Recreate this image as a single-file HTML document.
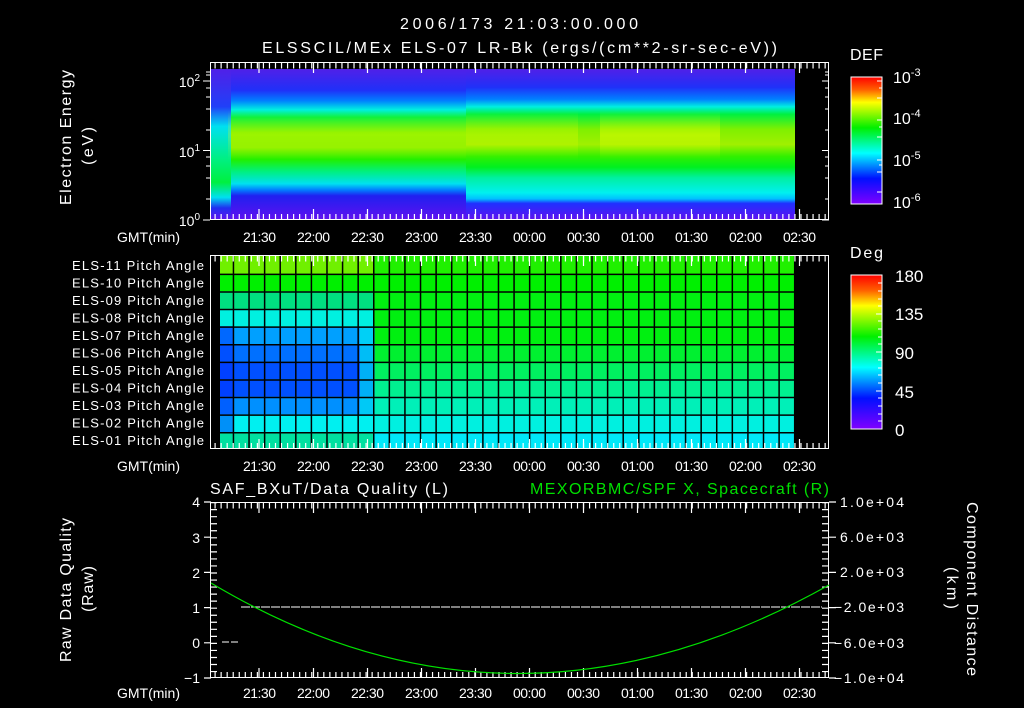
<!DOCTYPE html>
<html><head><meta charset="utf-8"><style>
html,body{margin:0;padding:0;background:#000;}
svg{display:block;}
text{font-family:"Liberation Sans",sans-serif;fill:#fff;}
</style></head><body>
<svg width="1024" height="708" viewBox="0 0 1024 708" xmlns="http://www.w3.org/2000/svg">
<defs>
<linearGradient id="spR" x1="0" y1="0" x2="0" y2="1">
<stop offset="0" stop-color="#5020e8"/><stop offset="0.12" stop-color="#2030f8"/><stop offset="0.2" stop-color="#0080ff"/>
<stop offset="0.25" stop-color="#00f0e0"/><stop offset="0.3" stop-color="#00f040"/><stop offset="0.4" stop-color="#80f000"/>
<stop offset="0.5" stop-color="#a0f000"/><stop offset="0.58" stop-color="#30f000"/><stop offset="0.65" stop-color="#00f020"/>
<stop offset="0.72" stop-color="#00f0a0"/><stop offset="0.82" stop-color="#00f0f0"/><stop offset="0.86" stop-color="#00c0ff"/>
<stop offset="0.89" stop-color="#2030ff"/><stop offset="1" stop-color="#6010f0"/></linearGradient>
<linearGradient id="spM" x1="0" y1="0" x2="0" y2="1">
<stop offset="0" stop-color="#5020e8"/><stop offset="0.14" stop-color="#2030f8"/><stop offset="0.21" stop-color="#0080ff"/>
<stop offset="0.27" stop-color="#00f0e0"/><stop offset="0.32" stop-color="#00f040"/><stop offset="0.42" stop-color="#78f000"/>
<stop offset="0.52" stop-color="#88f000"/><stop offset="0.6" stop-color="#20f000"/><stop offset="0.68" stop-color="#00f080"/>
<stop offset="0.76" stop-color="#00e0f0"/><stop offset="0.8" stop-color="#0080ff"/><stop offset="0.84" stop-color="#2020f0"/>
<stop offset="1" stop-color="#6010f0"/></linearGradient>
<linearGradient id="spL" x1="0" y1="0" x2="0" y2="1">
<stop offset="0" stop-color="#5020e8"/><stop offset="0.25" stop-color="#2040f8"/><stop offset="0.38" stop-color="#00e0f0"/>
<stop offset="0.6" stop-color="#00f080"/><stop offset="0.75" stop-color="#00f040"/><stop offset="0.85" stop-color="#00e0f0"/>
<stop offset="0.92" stop-color="#2030f0"/><stop offset="1" stop-color="#6010f0"/></linearGradient>
<linearGradient id="cb" x1="0" y1="0" x2="0" y2="1">
<stop offset="0" stop-color="#ff0000"/><stop offset="0.1" stop-color="#ff6000"/><stop offset="0.2" stop-color="#ffff00"/>
<stop offset="0.4" stop-color="#00f000"/><stop offset="0.6" stop-color="#00ffff"/><stop offset="0.8" stop-color="#0010ff"/>
<stop offset="1" stop-color="#8000ff"/></linearGradient>
<linearGradient id="hx" x1="0" y1="0" x2="1" y2="0">
<stop offset="0" stop-color="#000" stop-opacity="0"/><stop offset="0.5" stop-color="#000" stop-opacity="1"/><stop offset="1" stop-color="#000" stop-opacity="0"/></linearGradient>
<linearGradient id="yl" x1="0" y1="0" x2="0" y2="1">
<stop offset="0" stop-color="#ffff00" stop-opacity="0"/><stop offset="0.5" stop-color="#ffff00" stop-opacity="0.5"/><stop offset="1" stop-color="#ffff00" stop-opacity="0"/></linearGradient>
</defs>

<text x="400" y="29" font-size="16" textLength="238" lengthAdjust="spacing">2006/173 21:03:00.000</text>
<text x="262" y="53" font-size="16" textLength="515" lengthAdjust="spacing">ELSSCIL/MEx ELS-07 LR-Bk  (ergs/(cm**2-sr-sec-eV))</text>

<!-- Panel 1 spectrogram -->
<rect x="211" y="69" width="584" height="151" fill="url(#spR)"/>
<rect x="226" y="69" width="240" height="151" fill="url(#spM)"/>
<rect x="211" y="69" width="20" height="151" fill="url(#spL)"/>
<rect x="228" y="110" width="350" height="50" fill="url(#yl)" opacity="0.5"/>
<rect x="600" y="110" width="120" height="50" fill="url(#yl)" opacity="0.8"/>
<rect x="795" y="63" width="34" height="157" fill="#000"/>
<rect x="210.5" y="62.5" width="618" height="157" fill="none" stroke="#fff"/>
<g stroke="#fff" stroke-width="1.2">
<line x1="211" y1="65.5" x2="829" y2="65.5" stroke-width="6" stroke-dasharray="1.2 4.84" stroke-dashoffset="-3.5"/>
<line x1="211" y1="217" x2="829" y2="217" stroke-width="6" stroke-dasharray="1.2 4.84" stroke-dashoffset="-3.5"/>
</g>
<g stroke="#fff" stroke-width="1.2">
<path d="M259 62v11M313.5 62v11M367.5 62v11M421.5 62v11M475.5 62v11M529.5 62v11M583.5 62v11M637.5 62v11M691.5 62v11M745.5 62v11M799.5 62v11"/>
<path d="M259 220v-11M313.5 220v-11M367.5 220v-11M421.5 220v-11M475.5 220v-11M529.5 220v-11M583.5 220v-11M637.5 220v-11M691.5 220v-11M745.5 220v-11M799.5 220v-11"/>
</g>
<g stroke="#fff" stroke-width="1">
<path d="M203 81h7M203 150.5h7M203 220h7M206 88h4M206 97h4M206 109h4M206 130h4M206 157h4M206 166h4M206 178h4M206 199h4M206 75h4M206 72h4"/>
<path d="M829 81h-7M829 150.5h-7M829 220h-7M829 88h-4M829 97h-4M829 109h-4M829 130h-4M829 157h-4M829 166h-4M829 178h-4M829 199h-4M829 75h-4M829 72h-4"/>
</g>
<text x="200" y="87" font-size="14" text-anchor="end">10<tspan font-size="10" dy="-6">2</tspan></text>
<text x="200" y="157" font-size="14" text-anchor="end">10<tspan font-size="10" dy="-6">1</tspan></text>
<text x="200" y="226" font-size="14" text-anchor="end">10<tspan font-size="10" dy="-6">0</tspan></text>
<text transform="translate(71,205) rotate(-90)" font-size="16" textLength="135" lengthAdjust="spacing">Electron Energy</text>
<text transform="translate(93,165) rotate(-90)" font-size="16" textLength="38" lengthAdjust="spacing">(eV)</text>
<text x="117" y="242" font-size="14" textLength="63" lengthAdjust="spacing">GMT(min)</text>
<g font-size="14">
<text x="243" y="242" textLength="33">21:30</text><text x="297" y="242" textLength="33">22:00</text><text x="351" y="242" textLength="33">22:30</text><text x="405" y="242" textLength="33">23:00</text><text x="459" y="242" textLength="33">23:30</text><text x="513" y="242" textLength="33">00:00</text><text x="567" y="242" textLength="33">00:30</text><text x="621" y="242" textLength="33">01:00</text><text x="675" y="242" textLength="33">01:30</text><text x="729" y="242" textLength="33">02:00</text><text x="783" y="242" textLength="33">02:30</text>
</g>
<!-- colorbar 1 -->
<text x="850" y="60" font-size="16" textLength="33" lengthAdjust="spacing">DEF</text>
<rect x="851" y="77" width="31" height="127" fill="url(#cb)" stroke="#fff"/>
<path d="M882 81h-5M882 88h-3M882 98h-5M882 120h-5M882 127h-3M882 137h-5M882 160h-5M882 165h-3M882 172h-5M882 192h-5" stroke="#fff"/>
<g font-size="16"><text x="893" y="83">10<tspan font-size="11" dy="-7">-3</tspan></text><text x="893" y="124">10<tspan font-size="11" dy="-7">-4</tspan></text><text x="893" y="166">10<tspan font-size="11" dy="-7">-5</tspan></text><text x="893" y="208">10<tspan font-size="11" dy="-7">-6</tspan></text></g>

<!-- Panel 2 grid -->
<g>
<rect x="220" y="256" width="575" height="18" fill="#20f000"/>
<rect x="220" y="256" width="153" height="18" fill="#70f000"/>
<rect x="220" y="273.6" width="575" height="18" fill="#00f000"/>
<rect x="220" y="291.2" width="575" height="18" fill="#00f010"/>
<rect x="220" y="291.2" width="153" height="18" fill="#00e080"/>
<rect x="220" y="308.8" width="575" height="18" fill="#00f010"/>
<rect x="220" y="308.8" width="153" height="18" fill="#00f0e0"/>
<rect x="220" y="326.4" width="575" height="18" fill="#00f010"/>
<rect x="220" y="326.4" width="153" height="18" fill="#00a0ff"/>
<rect x="220" y="344" width="575" height="18" fill="#00f030"/>
<rect x="220" y="344" width="153" height="18" fill="#0070ff"/>
<rect x="220" y="361.6" width="575" height="18" fill="#00f060"/>
<rect x="220" y="361.6" width="153" height="18" fill="#0050ff"/>
<rect x="220" y="379.2" width="575" height="18" fill="#00f090"/>
<rect x="220" y="379.2" width="153" height="18" fill="#0050ff"/>
<rect x="220" y="396.8" width="575" height="18" fill="#00f0b8"/>
<rect x="220" y="396.8" width="153" height="18" fill="#0090ff"/>
<rect x="220" y="414.4" width="575" height="18" fill="#00f0e0"/>
<rect x="220" y="414.4" width="153" height="18" fill="#00f0f0"/>
<rect x="220" y="432" width="575" height="17" fill="#00e8f8"/>
<rect x="220" y="432" width="153" height="17" fill="#00e0a0"/>
<rect x="220" y="326" width="13" height="106" fill="#0030ff" opacity="0.5"/>
<rect x="360" y="326" width="15" height="88" fill="#00f0f0" opacity="0.6"/>
</g>
<g stroke="#000" stroke-width="1.5">
<line x1="232.7" y1="352.5" x2="795" y2="352.5" stroke-width="193" stroke-dasharray="1.5 14.09"/>
<line x1="507.5" y1="273.6" x2="507.5" y2="449" stroke-width="575" stroke-dasharray="1.5 16.1"/>
</g>
<rect x="795" y="256" width="34" height="193" fill="#000"/>
<rect x="210.5" y="255.5" width="618" height="193" fill="none" stroke="#fff"/>
<g stroke="#fff" stroke-width="1.2">
<line x1="211" y1="258.5" x2="829" y2="258.5" stroke-width="6" stroke-dasharray="1.2 4.84" stroke-dashoffset="-3.5"/>
<line x1="211" y1="446" x2="829" y2="446" stroke-width="6" stroke-dasharray="1.2 4.84" stroke-dashoffset="-3.5"/>
<path d="M259 256v10M313.5 256v10M367.5 256v10M421.5 256v10M475.5 256v10M529.5 256v10M583.5 256v10M637.5 256v10M691.5 256v10M745.5 256v10M799.5 256v10"/>
<path d="M259 449v-10M313.5 449v-10M367.5 449v-10M421.5 449v-10M475.5 449v-10M529.5 449v-10M583.5 449v-10M637.5 449v-10M691.5 449v-10M745.5 449v-10M799.5 449v-10"/>
</g>
<g font-size="13">
<text x="72" y="270" textLength="132" lengthAdjust="spacing">ELS-11 Pitch Angle</text><text x="72" y="287.5" textLength="132" lengthAdjust="spacing">ELS-10 Pitch Angle</text><text x="72" y="305" textLength="132" lengthAdjust="spacing">ELS-09 Pitch Angle</text><text x="72" y="322.5" textLength="132" lengthAdjust="spacing">ELS-08 Pitch Angle</text><text x="72" y="340" textLength="132" lengthAdjust="spacing">ELS-07 Pitch Angle</text><text x="72" y="357.5" textLength="132" lengthAdjust="spacing">ELS-06 Pitch Angle</text><text x="72" y="375" textLength="132" lengthAdjust="spacing">ELS-05 Pitch Angle</text><text x="72" y="392.5" textLength="132" lengthAdjust="spacing">ELS-04 Pitch Angle</text><text x="72" y="410" textLength="132" lengthAdjust="spacing">ELS-03 Pitch Angle</text><text x="72" y="427.5" textLength="132" lengthAdjust="spacing">ELS-02 Pitch Angle</text><text x="72" y="445" textLength="132" lengthAdjust="spacing">ELS-01 Pitch Angle</text>
</g>
<text x="117" y="471" font-size="14" textLength="63" lengthAdjust="spacing">GMT(min)</text>
<g font-size="14">
<text x="243" y="471" textLength="33">21:30</text><text x="297" y="471" textLength="33">22:00</text><text x="351" y="471" textLength="33">22:30</text><text x="405" y="471" textLength="33">23:00</text><text x="459" y="471" textLength="33">23:30</text><text x="513" y="471" textLength="33">00:00</text><text x="567" y="471" textLength="33">00:30</text><text x="621" y="471" textLength="33">01:00</text><text x="675" y="471" textLength="33">01:30</text><text x="729" y="471" textLength="33">02:00</text><text x="783" y="471" textLength="33">02:30</text>
</g>
<!-- colorbar 2 -->
<text x="850" y="258" font-size="16" textLength="33" lengthAdjust="spacing">Deg</text>
<rect x="851" y="275" width="31" height="154" fill="url(#cb)" stroke="#fff"/>
<path d="M882 283h-4M882 291h-4M882 299h-4M882 306h-4M882 314h-6M882 321h-4M882 329h-4M882 337h-4M882 344h-4M882 352h-6M882 360h-4M882 368h-4M882 375h-4M882 383h-4M882 391h-6M882 398h-4M882 406h-4M882 414h-4M882 421h-4" stroke="#fff"/>
<g font-size="17"><text x="895" y="282">180</text><text x="895" y="320">135</text><text x="895" y="359">90</text><text x="895" y="398">45</text><text x="895" y="436">0</text></g>

<!-- Panel 3 -->
<text x="210" y="494" font-size="16" textLength="238" lengthAdjust="spacing">SAF_BXuT/Data Quality (L)</text>
<text x="530" y="494" font-size="16" textLength="299" lengthAdjust="spacing" style="fill:#00e000">MEXORBMC/SPF X, Spacecraft (R)</text>
<rect x="210.5" y="502.5" width="618" height="175" fill="none" stroke="#fff"/>
<g stroke="#fff" stroke-width="1.2">
<line x1="211" y1="505.5" x2="829" y2="505.5" stroke-width="6" stroke-dasharray="1.2 4.84" stroke-dashoffset="-3.5"/>
<line x1="211" y1="675" x2="829" y2="675" stroke-width="6" stroke-dasharray="1.2 4.84" stroke-dashoffset="-3.5"/>
<path d="M259 503v10M313.5 503v10M367.5 503v10M421.5 503v10M475.5 503v10M529.5 503v10M583.5 503v10M637.5 503v10M691.5 503v10M745.5 503v10M799.5 503v10"/>
<path d="M259 678v-10M313.5 678v-10M367.5 678v-10M421.5 678v-10M475.5 678v-10M529.5 678v-10M583.5 678v-10M637.5 678v-10M691.5 678v-10M745.5 678v-10M799.5 678v-10"/>
<line x1="214" y1="502" x2="214" y2="678" stroke-width="6" stroke-dasharray="1.2 5.84"/>
<line x1="825" y1="502" x2="825" y2="678" stroke-width="6" stroke-dasharray="1.2 5.84"/>
<path d="M204 502h7M204 537.2h7M204 572.4h7M204 607.6h7M204 642.8h7M204 678h7"/>
<path d="M829 502h7M829 537.2h7M829 572.4h7M829 607.6h7M829 642.8h7M829 678h7"/>
</g>
<g font-size="14" text-anchor="end"><text x="200" y="507">4</text><text x="200" y="543">3</text><text x="200" y="578">2</text><text x="200" y="613">1</text><text x="200" y="648">0</text><text x="200" y="683">−1</text></g>
<g font-size="14"><text x="840" y="507" textLength="64" lengthAdjust="spacing">1.0e+04</text><text x="840" y="542" textLength="64" lengthAdjust="spacing">6.0e+03</text><text x="840" y="577" textLength="64" lengthAdjust="spacing">2.0e+03</text><text x="834" y="612" textLength="70" lengthAdjust="spacing">−2.0e+03</text><text x="834" y="648" textLength="70" lengthAdjust="spacing">−6.0e+03</text><text x="834" y="683" textLength="70" lengthAdjust="spacing">−1.0e+04</text></g>
<text transform="translate(71,662) rotate(-90)" font-size="16" textLength="144" lengthAdjust="spacing">Raw Data Quality</text>
<text transform="translate(93,612) rotate(-90)" font-size="16" textLength="46" lengthAdjust="spacing">(Raw)</text>
<text transform="translate(967,502) rotate(90)" font-size="16" textLength="174" lengthAdjust="spacing">Component Distance</text>
<text transform="translate(947,567) rotate(90)" font-size="16" textLength="42" lengthAdjust="spacing">(km)</text>
<line x1="241" y1="607" x2="822" y2="607" stroke="#fff" stroke-width="1" stroke-dasharray="9 1"/>
<line x1="222" y1="642" x2="240" y2="642" stroke="#fff" stroke-width="1" stroke-dasharray="7 2"/>
<path d="M211 583 Q512 763 829 585" fill="none" stroke="#00e000" stroke-width="1.2"/>
<text x="117" y="698" font-size="14" textLength="63" lengthAdjust="spacing">GMT(min)</text>
<g font-size="14">
<text x="243" y="698" textLength="33">21:30</text><text x="297" y="698" textLength="33">22:00</text><text x="351" y="698" textLength="33">22:30</text><text x="405" y="698" textLength="33">23:00</text><text x="459" y="698" textLength="33">23:30</text><text x="513" y="698" textLength="33">00:00</text><text x="567" y="698" textLength="33">00:30</text><text x="621" y="698" textLength="33">01:00</text><text x="675" y="698" textLength="33">01:30</text><text x="729" y="698" textLength="33">02:00</text><text x="783" y="698" textLength="33">02:30</text>
</g>
</svg>
</body></html>
